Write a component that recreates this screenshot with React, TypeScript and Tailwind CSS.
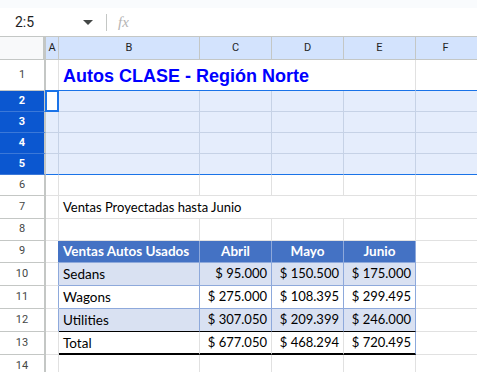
import type { ReactNode } from "react";

const ui = { fontFamily: "Roboto, 'Liberation Sans', sans-serif" };
const cal = { fontFamily: "Lato, 'Liberation Sans', sans-serif" };

const table = [
  { name: "Sedans", v: ["$ 95.000", "$ 150.500", "$ 175.000"], band: true },
  { name: "Wagons", v: ["$ 275.000", "$ 108.395", "$ 299.495"], band: false },
  { name: "Utilities", v: ["$ 307.050", "$ 209.399", "$ 246.000"], band: true },
];

function RowHead({ n, sel, h }: { n: number; sel?: boolean; h: string }) {
  return (
    <div
      className={`w-[46px] shrink-0 flex items-center justify-center border-r-2 border-b border-r-[#c4c7c5] text-[11px] ${h} ${
        sel ? "bg-[#0b57d0] text-white font-bold border-b-[#3b78d8]" : "bg-white text-[#444746] border-b-[#c4c7c5]"
      }`}
      style={ui}
    >
      {n}
    </div>
  );
}

function Row({ n, h, sel, children }: { n: number; h: string; sel?: boolean; children: ReactNode }) {
  return (
    <div className={`flex ${h}`}>
      <RowHead n={n} sel={sel} h={h} />
      {children}
    </div>
  );
}

// plain grid row: A..F
function Plain({ n, h, bottom = "border-b-[#e1e1e1]" }: { n: number; h: string; bottom?: string }) {
  return (
    <Row n={n} h={h}>
      <div className={`w-[13px] border-r border-b border-r-[#e1e1e1] ${bottom}`} />
      <div className={`w-[141px] border-r border-b border-r-[#e1e1e1] ${bottom}`} />
      <div className={`w-[72px] border-r border-b border-r-[#e1e1e1] ${bottom}`} />
      <div className={`w-[72px] border-r border-b border-r-[#e1e1e1] ${bottom}`} />
      <div className={`w-[72px] border-r border-b border-r-[#e1e1e1] ${bottom}`} />
      <div className={`flex-1 border-b ${bottom}`} />
    </Row>
  );
}

function SelRow({ n, last, active }: { n: number; last?: boolean; active?: boolean }) {
  const b = last ? "border-b-[#1a73e8]" : "border-b-[#c6d2e6]";
  return (
    <Row n={n} h="h-[21px]" sel>
      <div className={`w-[13px] border-r border-b border-r-[#c6d2e6] ${b} ${active ? "bg-white" : "bg-[#e5edfc]"} relative`}>
        {active && <div className="absolute -left-[1px] -top-[1px] w-[14px] h-[22px] border-2 border-[#1a73e8]" />}
      </div>
      <div className={`w-[141px] border-r border-b border-r-[#c6d2e6] bg-[#e5edfc] ${b}`} />
      <div className={`w-[72px] border-r border-b border-r-[#c6d2e6] bg-[#e5edfc] ${b}`} />
      <div className={`w-[72px] border-r border-b border-r-[#c6d2e6] bg-[#e5edfc] ${b}`} />
      <div className={`w-[72px] border-r border-b border-r-[#c6d2e6] bg-[#e5edfc] ${b}`} />
      <div className={`flex-1 border-b bg-[#e5edfc] ${b}`} />
    </Row>
  );
}

export default function App() {
  return (
    <div className="w-[477px] h-[372px] overflow-hidden bg-white text-[#1f1f1f]">
      {/* top strip */}
      <div className="h-[8px] bg-[#f9fbfd]" />

      {/* Name box + formula bar */}
      <div className="h-[28px] flex items-center bg-white" style={ui}>
        <div className="w-[106px] flex items-center pl-[15px] pr-[12px]">
          <span className="text-[14px] flex-1">2:5</span>
          <svg width="10" height="5" viewBox="0 0 10 5" className="mr-[1px]">
            <path d="M0 0h10L5 5z" fill="#444746" />
          </svg>
        </div>
        <div className="w-px h-[17px] bg-[#c4c7c5]" />
        <span className="ml-[11px] text-[15px] italic text-[#b4b4b4]" style={{ fontFamily: "'Liberation Serif', serif" }}>
          fx
        </span>
      </div>

      {/* column headers */}
      <div className="flex h-[24px] border-t border-[#c4c7c5] text-[11px] text-[#1f1f1f]" style={ui}>
        <div className="w-[46px] bg-[#f8f9fa] border-r-[3px] border-b border-r-[#c4c7c5] border-b-[#c4c7c5]" />
        {[
          ["A", "w-[13px]"],
          ["B", "w-[141px]"],
          ["C", "w-[72px]"],
          ["D", "w-[72px]"],
          ["E", "w-[72px]"],
        ].map(([l, w]) => (
          <div key={l} className={`${w} bg-[#d3e3fd] border-r border-b border-[#c4c7c5] flex items-center justify-center`}>
            {l}
          </div>
        ))}
        <div className="flex-1 bg-[#d3e3fd] border-b border-[#c4c7c5] flex items-center justify-center pr-[2px]">F</div>
      </div>

      {/* row 1 title */}
      <Row n={1} h="h-[31px]">
        <div className="w-[13px] border-r border-b border-r-[#e1e1e1] border-b-[#1a73e8]" />
        <div className="w-[357px] border-r border-b border-r-[#e1e1e1] border-b-[#1a73e8] flex items-center pl-[4px] pt-[2px]">
          <span className="text-[18px] font-bold text-[#0000ff] whitespace-nowrap" style={{ fontFamily: "'Liberation Sans', Arial, sans-serif" }}>
            Autos CLASE - Región Norte
          </span>
        </div>
        <div className="flex-1 border-b border-b-[#1a73e8]" />
      </Row>

      <SelRow n={2} active />
      <SelRow n={3} />
      <SelRow n={4} />
      <SelRow n={5} last />

      <Plain n={6} h="h-[21px]" />

      {/* row 7 */}
      <Row n={7} h="h-[23px]">
        <div className="w-[13px] border-r border-b border-[#e1e1e1]" />
        <div className="w-[357px] border-r border-b border-[#e1e1e1] flex items-center pl-[4px] pt-[1px] text-[13px] text-black whitespace-nowrap" style={cal}>
          Ventas Proyectadas hasta Junio
        </div>
        <div className="flex-1 border-b border-[#e1e1e1]" />
      </Row>

      <Plain n={8} h="h-[22px]" />

      {/* row 9 table header */}
      <Row n={9} h="h-[22px]">
        <div className="w-[13px] border-r border-b border-r-[#4472c4] border-b-[#e1e1e1]" />
        <div className="w-[141px] bg-[#4472c4] border-r border-b border-[#8ea9db] flex items-center pl-[4px] text-[13.5px] font-bold text-white whitespace-nowrap" style={cal}>
          Ventas Autos Usados
        </div>
        {["Abril", "Mayo", "Junio"].map((m) => (
          <div key={m} className="w-[72px] bg-[#4472c4] border-r border-b border-[#8ea9db] flex items-center justify-center text-[13.5px] font-bold text-white" style={cal}>
            {m}
          </div>
        ))}
        <div className="flex-1 border-b border-[#e1e1e1]" />
      </Row>

      {table.map((r, i) => (
        <Row key={r.name} n={10 + i} h="h-[23px]">
          <div className={`w-[13px] border-r border-b border-r-[#8ea9db] border-b-[#e1e1e1]`} />
          <div
            className={`w-[141px] border-r border-b border-r-[#8ea9db] ${i === 2 ? "border-b-black" : "border-b-[#8ea9db]"} ${r.band ? "bg-[#d9e1f2]" : "bg-white"} flex items-center pl-[4px] text-[13.5px] text-black`}
            style={cal}
          >
            {r.name}
          </div>
          {r.v.map((v, j) => (
            <div
              key={j}
              className={`w-[72px] border-r border-b border-r-[#8ea9db] ${i === 2 ? "border-b-black" : "border-b-[#8ea9db]"} ${r.band ? "bg-[#d9e1f2]" : "bg-white"} flex items-center justify-end pr-[4px] text-[13px] text-black whitespace-nowrap`}
              style={cal}
            >
              {v}
            </div>
          ))}
          <div className="flex-1 border-b border-[#e1e1e1]" />
        </Row>
      ))}

      {/* total */}
      <Row n={13} h="h-[23px]">
        <div className="w-[13px] border-r border-b border-r-[#e1e1e1] border-b-[#e1e1e1]" />
        <div className="w-[141px] border-r border-r-[#e1e1e1] border-b-2 border-b-black flex items-center pl-[4px] pt-[1px] text-[13.5px] text-black" style={cal}>
          Total
        </div>
        {["$ 677.050", "$ 468.294", "$ 720.495"].map((v, j) => (
          <div
            key={j}
            className={`w-[72px] border-r border-b-2 border-b-black ${j === 2 ? "border-r-[#8ea9db]" : "border-r-[#e1e1e1]"} flex items-center justify-end pr-[4px] pt-[1px] text-[13px] text-black whitespace-nowrap`}
            style={cal}
          >
            {v}
          </div>
        ))}
        <div className="flex-1 border-b border-[#e1e1e1]" />
      </Row>

      <Plain n={14} h="h-[23px]" />
    </div>
  );
}
